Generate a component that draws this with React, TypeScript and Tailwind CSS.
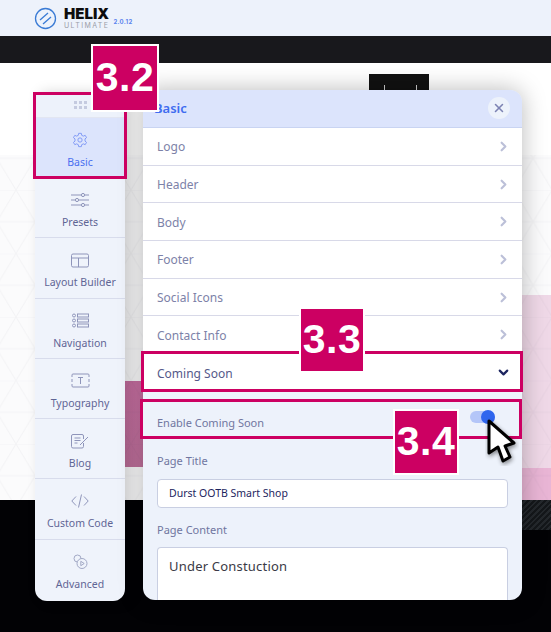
import { X, ChevronRight, ChevronDown } from "lucide-react";

const rows = ["Logo", "Header", "Body", "Footer", "Social Icons", "Contact Info"];

const GearIcon = () => (
  <svg width="16" height="16" viewBox="0 0 24 24" fill="none" stroke="#7d97f5" strokeWidth="1.4">
    <path d="M10 2h4l.6 3 2.4 1.2 2.8-1.2 2 3.4-2.3 2v3.2l2.3 2-2 3.4-2.8-1.2L14.600 19l-.6 3h-4l-.6-3L7 17.800l-2.800 1.200-2-3.400 2.300-2v-3.200l-2.300-2 2-3.400L7 6.200 9.400 5z" />
    <circle cx="12" cy="12" r="3.200" />
  </svg>
);

const PresetsIcon = () => (
  <svg width="18" height="14" viewBox="0 0 18 14" fill="none" stroke="#8f95ba" strokeWidth="1">
    <path d="M0 2h10M14 2h4M0 7h4M8 7h10M0 12h10M14 12h4" />
    <circle cx="12" cy="2" r="1.600" />
    <circle cx="6" cy="7" r="1.600" />
    <circle cx="12" cy="12" r="1.600" />
  </svg>
);

const LayoutIcon = () => (
  <svg width="18" height="15" viewBox="0 0 18 15" fill="none" stroke="#8f95ba" strokeWidth="1">
    <rect x="0.500" y="1" width="17" height="13" rx="1.500" />
    <path d="M0.500 5h17M7.500 5v9" />
  </svg>
);

const NavIcon = () => (
  <svg width="17" height="15" viewBox="0 0 17 15" fill="none" stroke="#8f95ba" strokeWidth="1">
    <circle cx="2" cy="2.500" r="1.500" />
    <circle cx="2" cy="7.500" r="1.500" />
    <circle cx="2" cy="12.500" r="1.500" />
    <rect x="5.500" y="1" width="11" height="3" />
    <rect x="5.500" y="6" width="11" height="3" />
    <rect x="5.500" y="11" width="11" height="3" />
  </svg>
);

const TypoIcon = () => (
  <svg width="19" height="15" viewBox="0 0 19 15" fill="none" stroke="#8f95ba" strokeWidth="1">
    <path d="M1 4V2a1 1 0 0 1 1-1h15a1 1 0 0 1 1 1v2M1 6v3M18 6v3M1 11v2a1 1 0 0 0 1 1h15a1 1 0 0 0 1-1v-2" />
    <path d="M7 4.500h5M9.500 4.500v6.500" />
  </svg>
);

const BlogIcon = () => (
  <svg width="18" height="15" viewBox="0 0 18 15" fill="none" stroke="#8f95ba" strokeWidth="1">
    <path d="M12.500 9v3.500a1.500 1.500 0 0 1-1.500 1.500H2a1.500 1.500 0 0 1-1.500-1.500V2A1.500 1.500 0 0 1 2 .500h9A1.500 1.500 0 0 1 12.500 2v3" />
    <path d="M3.500 4h6M3.500 6.500h6M3.500 9h3M9 11l8-8" />
  </svg>
);

const CodeIcon = () => (
  <svg width="18" height="14" viewBox="0 0 18 14" fill="none" stroke="#8f95ba" strokeWidth="1">
    <path d="M5 2.500 .800 7 5 11.500M13 2.500 17.200 7 13 11.500M10.500 .500 7.500 13.500" />
  </svg>
);

const AdvancedIcon = () => (
  <svg width="15" height="15" viewBox="0 0 15 15" fill="none" stroke="#9aa0c0" strokeWidth="0.900">
    <circle cx="4.500" cy="4.500" r="3.500" />
    <circle cx="9" cy="9.500" r="5" fill="#eff3fb" />
    <path d="M7.800 7.300v4.400l3.400-2.200z" />
  </svg>
);

const navItems = [
  { label: "Presets", icon: <PresetsIcon /> },
  { label: "Layout Builder", icon: <LayoutIcon /> },
  { label: "Navigation", icon: <NavIcon /> },
  { label: "Typography", icon: <TypoIcon /> },
  { label: "Blog", icon: <BlogIcon /> },
  { label: "Custom Code", icon: <CodeIcon /> },
  { label: "Advanced", icon: <AdvancedIcon /> },
];

const Tag = ({ text, className }: { text: string; className: string }) => (
  <div
    className={`absolute flex items-center justify-center bg-[#cc0062] border-2 border-white text-white text-[41px] font-bold tracking-[0.5px] font-['Liberation_Sans',sans-serif] ${className}`}
  >
    {text}
  </div>
);

export default function App() {
  return (
    <div className="relative w-[551px] h-[632px] overflow-hidden bg-white font-['Noto_Sans',sans-serif]">
      {/* site behind the panels */}
      <div className="h-9 bg-[#edf2fb] flex items-center pl-[34px]">
        <svg width="23" height="23" viewBox="0 0 23 23" fill="none" stroke="#3a7bd5" strokeWidth="1.300">
          <circle cx="11.500" cy="11.500" r="10" />
          <path d="M6 13 14 6M9 17l8-7" />
        </svg>
        <div className="ml-[7px] flex flex-col">
          <span className="text-[15px] leading-[13px] font-black text-[#0d0d0d] font-['Inter',sans-serif]">HELIX</span>
          <span className="mt-[2px] text-[7px] leading-[8px] tracking-[1.400px] text-[#9a9da8] font-['Inter',sans-serif]">ULTIMATE</span>
        </div>
        <span className="ml-1 mt-[7px] text-[6px] font-bold tracking-[0.300px] text-[#5b84ee] font-['Inter',sans-serif]">2.0.12</span>
      </div>
      <div className="h-[27px] bg-[#18181c]" />
      <div className="h-[92px] bg-white relative">
        <div className="absolute left-[369px] top-[11px] w-[60px] h-[20px] bg-[#111111]">
          <span className="absolute left-[15px] top-[11px] w-px h-[9px] bg-[#cccccc]" />
          <span className="absolute left-[47px] top-[11px] w-px h-[9px] bg-[#cccccc]" />
        </div>
      </div>
      <div className="relative h-[345px] bg-[#fbfbfc]">
        <div className="absolute left-[125px] top-[226px] w-[18px] h-[86px] bg-gradient-to-b from-[#c86fa2] to-[#c0709c]" />
        <div className="absolute left-[522px] top-[140px] w-[29px] h-[173px] bg-[#efd8e7]" />
        <div className="absolute left-[522px] top-[313px] w-[29px] h-[32px] bg-[#e9b5d5]" />
        <svg className="absolute inset-0" width="551" height="345">
          <defs>
            <pattern id="tri" width="38.300" height="63.500" patternUnits="userSpaceOnUse" x="16" y="35">
              <path d="M0 0 19.150 31.750 0 63.500M38.300 0 19.150 31.750 38.300 63.500M0 0h38.300M0 31.750h38.300" fill="none" stroke="rgba(60,60,80,0.04)" strokeWidth="1" />
            </pattern>
          </defs>
          <rect width="551" height="345" fill="url(#tri)" />
        </svg>
      </div>
      <div className="relative h-[132px] bg-[#020205]">
        <div className="absolute left-[522px] top-0 w-[29px] h-[30px] bg-[repeating-linear-gradient(135deg,#14171a,#14171a_2px,#24282c_2px,#24282c_4px)]" />
      </div>

      {/* toolbar */}
      <div className="absolute left-[35px] top-[93px] w-[90px] h-[508px] flex flex-col rounded-b-xl bg-[#eff3fb] shadow-[6px_0_14px_rgba(0,0,0,0.18)] overflow-hidden">
        <div className="h-[25px] shrink-0 flex items-center justify-center bg-[#edf2fb] border-b border-[#e2e6f2]">
          <div className="grid grid-cols-3 gap-[2px]">
            {[0, 1, 2, 3, 4, 5].map((i) => (
              <span key={i} className="w-[3px] h-[3px] bg-[#c5cbe0]" />
            ))}
          </div>
        </div>
        <div className="h-[60px] shrink-0 flex flex-col items-center pt-[14px] bg-[#dce4fc]">
          <GearIcon />
          <span className="mt-[7px] text-[10.500px] leading-[15px] text-[#4a6ff0]">Basic</span>
        </div>
        {navItems.map((item, i) => (
          <div
            key={item.label}
            className={`h-[60.3px] shrink-0 flex flex-col items-center pt-[13px] ${i < navItems.length - 1 ? "border-b border-[#d8dcec]" : ""}`}
          >
            <div className="h-[18px] flex items-center">{item.icon}</div>
            <span className="mt-[6px] text-[10.500px] leading-[15px] text-[#5f6595] whitespace-nowrap">{item.label}</span>
          </div>
        ))}
      </div>

      {/* settings panel */}
      <div className="absolute left-[143px] top-[90px] w-[379px] h-[510px] rounded-xl overflow-hidden bg-[#edf2fb] shadow-[0_0_24px_rgba(0,0,0,0.28)] flex flex-col">
        <div className="h-[38px] shrink-0 flex items-center justify-between pl-[11px] pr-[12px] bg-[#dce4fc] border-b border-[#c9d4f2]">
          <span className="pt-px text-[13px] font-semibold text-[#3f6cf0]">Basic</span>
          <span className="-mt-px w-[22px] h-[22px] rounded-full bg-[#edf2fb] flex items-center justify-center">
            <X size={14} strokeWidth={2.600} className="text-[#7d83b3]" />
          </span>
        </div>
        {rows.map((r) => (
          <div key={r} className="h-[37.700px] shrink-0 flex items-center justify-between pl-[14px] pr-[11px] bg-white border-b border-[#d8d9e8]">
            <span className="pt-[2px] text-[12px] text-[#7d82a8]">{r}</span>
            <ChevronRight size={15} strokeWidth={3.500} className="text-[#bcc0d8]" />
          </div>
        ))}
        <div className="h-[37px] shrink-0 flex items-center justify-between pl-[14px] pr-[11px] bg-white">
          <span className="pt-[2px] text-[12px] text-[#55598a]">Coming Soon</span>
          <ChevronDown size={15} strokeWidth={3.500} className="text-[#1d2560]" />
        </div>
        <div className="px-[14px] pt-[24px] flex flex-col">
          <div className="flex items-center justify-between h-[16px]">
            <span className="text-[11px] text-[#7076a0]">Enable Coming Soon</span>
            <div className="relative w-[25px] h-[12px] mr-[13px] -mt-[12px] rounded-full bg-[#b4c6f8]">
              <span className="absolute right-0 -top-px w-[14px] h-[14px] rounded-full bg-[#2f66ee]" />
            </div>
          </div>
          <span className="mt-[22px] text-[11px] leading-[16px] text-[#7076a0]">Page Title</span>
          <div className="mt-[10px] h-[29px] w-[351px] flex items-center px-[11px] rounded bg-white border border-[#c9cfe2] text-[10.500px] text-[#1d2560]">
            Durst OOTB Smart Shop
          </div>
          <span className="mt-[14px] text-[11px] leading-[16px] text-[#7076a0]">Page Content</span>
          <div className="mt-[9px] h-[70px] w-[351px] px-[11px] pt-[8px] rounded-t bg-white border border-b-0 border-[#c9cfe2] text-[13px] leading-5 tracking-[0.200px] text-[#3a3a46]">
            Under Constuction
          </div>
        </div>
      </div>

      {/* annotations */}
      <div className="absolute left-[33px] top-[92px] w-[94px] h-[87px] border-[3px] border-[#cc0062]" />
      <div className="absolute left-[141px] top-[351px] w-[382px] h-[41px] border-[3px] border-[#cc0062]" />
      <div className="absolute left-[140px] top-[399px] w-[382px] h-[40px] border-[3px] border-[#cc0062]" />
      <Tag text="3.2" className="left-[91px] top-[44px] w-[68px] h-[68px]" />
      <Tag text="3.3" className="left-[299px] top-[307px] w-[66px] h-[66px]" />
      <Tag text="3.4" className="left-[393px] top-[409px] w-[66px] h-[66px]" />

      <svg className="absolute left-[485px] top-[418px]" width="34" height="48" viewBox="0 0 34 48">
        <path
          d="M4 3 4 35 13 29 18 43 25 39 20 28 29 25z"
          fill="#ffffff"
          stroke="#000000"
          strokeWidth="3"
          strokeLinejoin="round"
          style={{ filter: "drop-shadow(1px 2px 2px rgba(0,0,0,0.45))" }}
        />
      </svg>
    </div>
  );
}
